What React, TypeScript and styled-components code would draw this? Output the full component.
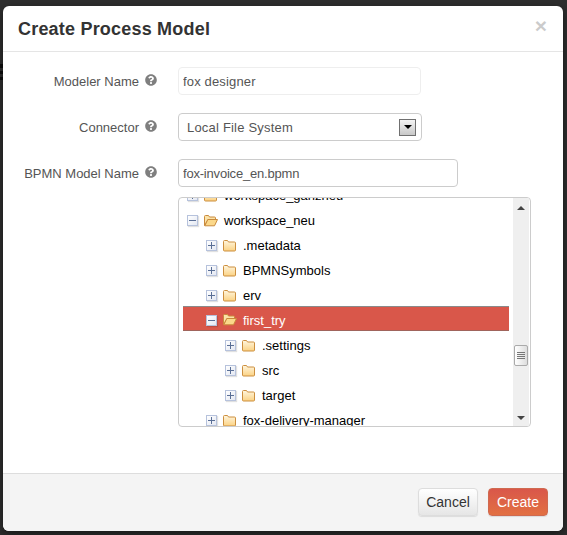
import React from 'react'
import styled, { createGlobalStyle } from 'styled-components'
import { FaQuestionCircle } from 'react-icons/fa'

const Global = createGlobalStyle`
  html, body { margin: 0; height: 100%; }
  body {
    background: #2e2e2e;
    font-family: "Liberation Sans", Arial, sans-serif;
    overflow: hidden;
  }
`

const Page = styled.div`
  width: 567px;
  height: 535px;
  padding: 6px 4px 4px 3px;
  box-sizing: border-box;
  position: relative;
  /* sliver of the dimmed page text behind the modal */
  &::before {
    content: '';
    position: absolute;
    left: 0;
    top: 64px;
    width: 3px;
    height: 16px;
    background: linear-gradient(#0d0d0d 0 4px, transparent 4px 7px, #0d0d0d 7px 10px, transparent 10px 13px, #0d0d0d 13px);
  }
`

const Dialog = styled.div`
  width: 560px;
  height: 525px;
  background: #fff;
  border-radius: 6px;
  box-shadow: 0 3px 9px rgba(0, 0, 0, 0.5);
  display: flex;
  flex-direction: column;
  overflow: hidden;
  position: relative;
`

const Header = styled.div`
  height: 45px;
  flex: none;
  border-bottom: 1px solid #e5e5e5;
  display: flex;
  align-items: center;
  justify-content: space-between;
  padding: 0 16px 0 15px;
`

const Title = styled.h4`
  margin: 0;
  font-size: 18px;
  font-weight: bold;
  letter-spacing: 0.2px;
  color: #333;
  line-height: 20px;
`

const Close = styled.span`
  font-size: 21px;
  font-weight: bold;
  line-height: 1;
  color: #000;
  opacity: 0.2;
  margin-bottom: 6px;
`

const Body = styled.div`
  flex: 1;
  padding: 15px 32px 0 0;
  display: flex;
  flex-direction: column;
`

const FormRow = styled.div`
  display: grid;
  grid-template-columns: 175px 1fr;
  align-items: center;
  height: 28px;
  margin-bottom: 18px;
`

const LabelCell = styled.div`
  display: flex;
  justify-content: flex-end;
  align-items: center;
  gap: 6px;
  padding-right: 21px;
  font-size: 13px;
  color: #555;
`

const Help = styled(FaQuestionCircle)`
  width: 12px;
  height: 12px;
  color: #7f7f7f;
  margin-top: -2px;
`

const TextInput = styled.input<{ $w: number; $faint?: boolean; $spacing: number }>`
  box-sizing: border-box;
  width: ${(p) => p.$w}px;
  height: 28px;
  padding: 0 4px;
  font: 13px "Liberation Sans", Arial, sans-serif;
  letter-spacing: ${(p) => p.$spacing}px;
  color: #555;
  background: #fff;
  border: 1px solid ${(p) => (p.$faint ? '#eee' : '#ccc')};
  border-radius: 4px;
  outline: none;
`

const SelectBox = styled.div`
  box-sizing: border-box;
  width: 244px;
  height: 28px;
  border: 1px solid #ccc;
  border-radius: 4px;
  padding: 0 5px 0 8px;
  display: flex;
  align-items: center;
  justify-content: space-between;
  font-size: 13px;
  letter-spacing: 0.2px;
  color: #555;
`

const SelectArrow = styled.span`
  box-sizing: border-box;
  width: 17px;
  height: 17px;
  border: 1px solid #707070;
  background: linear-gradient(#f4f4f4, #c8c8c8);
  display: flex;
  align-items: center;
  justify-content: center;
  &::after {
    content: '';
    border-top: 4px solid #000;
    border-left: 4px solid transparent;
    border-right: 4px solid transparent;
  }
`

const TreeWrap = styled.div`
  margin: -8px 0 0 175px;
  box-sizing: border-box;
  width: 353px;
  height: 230px;
  border: 1px solid #ccc;
  border-radius: 4px;
  display: flex;
  overflow: hidden;
`

const TreeList = styled.div`
  flex: 1;
  padding: 0 4px;
  margin-top: -15px;
`

const Row = styled.div<{ $depth: number; $selected?: boolean }>`
  box-sizing: border-box;
  height: 25px;
  display: flex;
  align-items: center;
  padding-left: ${(p) => 4 + p.$depth * 19}px;
  font-size: 13px;
  color: #000;
  ${(p) =>
    p.$selected &&
    `
    color: #fff;
    background: #d9574a;
    border-top: 1px solid #8a8a8a;
    border-bottom: 1px solid #a0645c;
    margin: -2px 0 2px;
    padding-top: 3px;
  `}
`

const Expander = styled.span<{ $open?: boolean }>`
  box-sizing: border-box;
  flex: none;
  width: 11px;
  height: 11px;
  background: linear-gradient(135deg, #fff, #e4e8f2);
  border: 1px solid #b6c2dc;
  box-shadow: 1px 1px 1px rgba(0, 0, 0, 0.12);
  position: relative;
  margin-right: 6px;
  &::before {
    content: '';
    position: absolute;
    left: 1px;
    right: 1px;
    top: 4px;
    height: 1px;
    background: #5a6f96;
  }
  &::after {
    content: '';
    display: ${(p) => (p.$open ? 'none' : 'block')};
    position: absolute;
    top: 1px;
    bottom: 1px;
    left: 4px;
    width: 1px;
    background: #5a6f96;
  }
`

const FolderSvg = styled.svg`
  flex: none;
  width: 14px;
  height: 12px;
  margin-right: 6px;
`

const Scrollbar = styled.div`
  flex: none;
  width: 16px;
  margin-right: 1px;
  margin-top: 0;
  background: #efefef;
  display: flex;
  flex-direction: column;
  align-items: center;
  justify-content: space-between;
  padding: 8px 0 6px;
  box-sizing: border-box;
  position: relative;
`

const ScrollArrow = styled.span<{ $up?: boolean }>`
  width: 0;
  height: 0;
  border-left: 4px solid transparent;
  border-right: 4px solid transparent;
  ${(p) => (p.$up ? 'border-bottom: 4px solid #444;' : 'border-top: 4px solid #444;')}
`

const Thumb = styled.div`
  position: absolute;
  left: 1px;
  top: 147px;
  box-sizing: border-box;
  width: 14px;
  height: 21px;
  background: linear-gradient(90deg, #fff, #ddd);
  border: 1px solid #aaa;
  border-radius: 2px;
  display: flex;
  flex-direction: column;
  justify-content: center;
  gap: 1px;
  padding: 0 2px;
  i {
    display: block;
    height: 1px;
    background: #777;
  }
`

const Footer = styled.div`
  flex: none;
  height: 58px;
  box-sizing: border-box;
  border-top: 1px solid #ddd;
  background: #f4f4f4;
  display: flex;
  justify-content: flex-end;
  align-items: flex-start;
  gap: 10px;
  padding: 14px 15px 0 0;
`

const Btn = styled.button<{ $primary?: boolean }>`
  box-sizing: border-box;
  width: 60px;
  height: 28px;
  padding: 0;
  font: 14px "Liberation Sans", Arial, sans-serif;
  border-radius: 4px;
  color: ${(p) => (p.$primary ? '#fff' : '#333')};
  border: 1px solid ${(p) => (p.$primary ? '#cf6a50' : '#ddd')};
  box-shadow: 0 1px 1px rgba(0, 0, 0, 0.1);
  background: ${(p) =>
    p.$primary ? 'linear-gradient(#d9574a, #e27042)' : 'linear-gradient(#fff, #e6e6e6)'};
`

function Folder({ open }: { open?: boolean }) {
  if (open) {
    return (
      <FolderSvg viewBox="0 0 14 12">
        <path d="M.5 10.5V1.5a1 1 0 0 1 1-1h3l1 1.5h5a1 1 0 0 1 1 1v1.5H4L.5 10.5z" fill="#fbe3a8" stroke="#c98a3c" />
        <path d="M.8 10.8 3.8 4.5h9.7l-3 6.3z" fill="#fbd88a" stroke="#c98a3c" strokeLinejoin="round" />
      </FolderSvg>
    )
  }
  return (
    <FolderSvg viewBox="0 0 14 12">
      <defs>
        <linearGradient id="fold" x1="0" y1="0" x2="0" y2="1">
          <stop offset="0" stopColor="#fff6df" />
          <stop offset="1" stopColor="#fbd283" />
        </linearGradient>
      </defs>
      <path d="M.5 1.5a1 1 0 0 1 1-1h3l1 1.5h6a1 1 0 0 1 1 1v7a1 1 0 0 1-1 1h-10a1 1 0 0 1-1-1z" fill="url(#fold)" stroke="#cc8f3f" />
    </FolderSvg>
  )
}

const nodes = [
  { name: 'workspace_ganzneu', depth: 0 },
  { name: 'workspace_neu', depth: 0, open: true },
  { name: '.metadata', depth: 1 },
  { name: 'BPMNSymbols', depth: 1 },
  { name: 'erv', depth: 1 },
  { name: 'first_try', depth: 1, open: true, selected: true },
  { name: '.settings', depth: 2 },
  { name: 'src', depth: 2 },
  { name: 'target', depth: 2 },
  { name: 'fox-delivery-manager', depth: 1 },
]

export default function App() {
  return (
    <Page>
      <Global />
      <Dialog>
        <Header>
          <Title>Create Process Model</Title>
          <Close>×</Close>
        </Header>
        <Body>
          <FormRow>
            <LabelCell>Modeler Name <Help /></LabelCell>
            <TextInput $w={243} $faint $spacing={0.15} defaultValue="fox designer" />
          </FormRow>
          <FormRow>
            <LabelCell>Connector <Help /></LabelCell>
            <SelectBox>Local File System<SelectArrow /></SelectBox>
          </FormRow>
          <FormRow>
            <LabelCell>BPMN Model Name <Help /></LabelCell>
            <TextInput $w={280} $spacing={-0.2} defaultValue="fox-invoice_en.bpmn" />
          </FormRow>
          <TreeWrap>
            <TreeList>
              {nodes.map((n) => (
                <Row key={n.name} $depth={n.depth} $selected={n.selected}>
                  <Expander $open={n.open} />
                  <Folder open={n.open} />
                  {n.name}
                </Row>
              ))}
            </TreeList>
            <Scrollbar>
              <ScrollArrow $up />
              <Thumb><i /><i /><i /><i /></Thumb>
              <ScrollArrow />
            </Scrollbar>
          </TreeWrap>
        </Body>
        <Footer>
          <Btn>Cancel</Btn>
          <Btn $primary>Create</Btn>
        </Footer>
      </Dialog>
    </Page>
  )
}
